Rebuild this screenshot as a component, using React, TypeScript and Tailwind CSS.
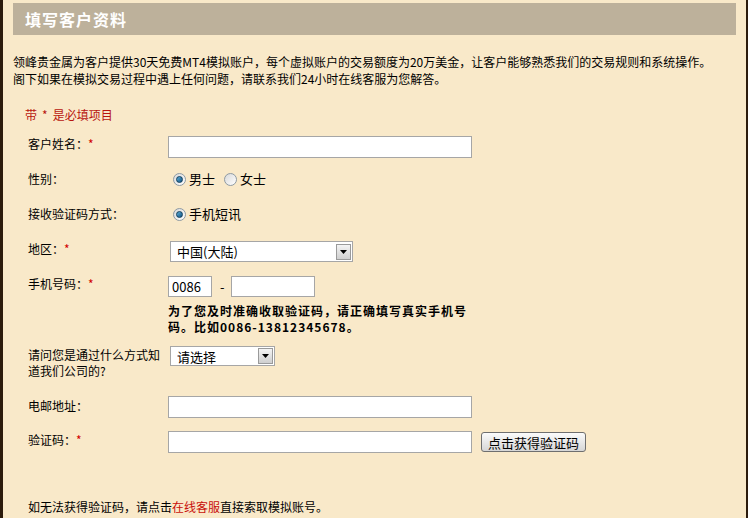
import React from 'react';

const font = { fontFamily: '"Noto Sans CJK SC", "Liberation Sans", sans-serif' };

const Radio = ({ checked }: { checked?: boolean }) => (
  <span className="inline-flex h-[13px] w-[13px] items-center justify-center rounded-full border border-[#8e9aa3] bg-gradient-to-br from-[#d9d9d9] to-[#ffffff]">
    {checked && (
      <span className="h-[7px] w-[7px] rounded-full border border-[#0e3c5a] bg-gradient-to-br from-[#5fb0da] to-[#0d5484]" />
    )}
  </span>
);

const SelectBox = ({ value, width }: { value: string; width: string }) => (
  <div className={`flex h-full items-center justify-between border border-[#a6a6a6] bg-white pl-[6px] pr-px ${width}`}>
    <span className="text-[13px] leading-none text-black">{value}</span>
    <span className="flex h-[16px] w-[15px] items-center justify-center border border-[#9a9a9a] bg-gradient-to-b from-[#f4f4f4] to-[#cfcfcf]">
      <svg width="7" height="4" viewBox="0 0 7 4">
        <path d="M0 0h7L3.5 4z" fill="#000" />
      </svg>
    </span>
  </div>
);

const Req = () => <span className="text-[#d20000]">*</span>;

export default function App() {
  return (
    <div
      style={font}
      className="h-[518px] w-[748px] overflow-hidden border-l-[3px] border-r-[2px] border-[#2c1b0c] bg-[#f9e9c9] text-[12px] text-black"
    >
      <div className="pl-[10px] pt-[3px]">
        <div className="flex h-[32px] w-[723px] items-center bg-[#bdb19b] pl-[12px]">
          <span className="text-[16px] font-bold tracking-[1px] text-white">填写客户资料</span>
        </div>

        <p className="mt-[18px] leading-[17px]">
          领峰贵金属为客户提供30天免费MT4模拟账户，每个虚拟账户的交易额度为20万美金，让客户能够熟悉我们的交易规则和系统操作。
          <br />
          阁下如果在模拟交易过程中遇上任何问题，请联系我们24小时在线客服为您解答。
        </p>

        <p className="ml-[12px] mt-[20px] leading-[16px] text-[#b8150f]">
          带<span className="mx-[5px]">*</span>是必填项目
        </p>

        <div className="ml-[15px]">
          <div className="mt-[13px] flex h-[22px] items-start">
            <span className="w-[140px] leading-[16px]">客户姓名：<Req /></span>
            <input className="h-[22px] w-[304px] border border-[#a6a6a6] bg-white outline-none" />
          </div>

          <div className="mt-[9px] flex h-[24px] items-center">
            <span className="w-[140px]">性别：</span>
            <div className="ml-[5px] flex items-center gap-[3px] text-[13px]">
              <Radio checked />
              <span>男士</span>
              <span className="ml-[3px]" />
              <Radio />
              <span>女士</span>
            </div>
          </div>

          <div className="mt-[11px] flex h-[24px] items-center">
            <span className="w-[140px]">接收验证码方式：</span>
            <div className="ml-[5px] flex items-center gap-[3px] text-[13px]">
              <Radio checked />
              <span>手机短讯</span>
            </div>
          </div>

          <div className="mt-[15px] flex h-[21px] items-start">
            <span className="w-[140px] leading-[16px]">地区：<Req /></span>
            <div className="ml-[2px] h-[21px]">
              <SelectBox value="中国(大陆)" width="w-[183px]" />
            </div>
          </div>

          <div className="mt-[14px] flex items-start">
            <span className="w-[140px] leading-[16px]">手机号码：<Req /></span>
            <div>
              <div className="flex h-[21px] items-center">
                <div className="flex h-[21px] w-[44px] items-center border border-[#a6a6a6] bg-white pl-[3px] text-[13px]">
                  0086
                </div>
                <span className="ml-[8px] mr-[6px] text-[13px]">-</span>
                <input className="h-[21px] w-[84px] border border-[#a6a6a6] bg-white outline-none" />
              </div>
              <p className="mt-[6px] text-[12px] font-bold leading-[16px] tracking-[1px]">
                为了您及时准确收取验证码，请正确填写真实手机号
                <br />
                码。比如0086-13812345678。
              </p>
            </div>
          </div>

          <div className="mt-[11px] flex items-start">
            <span className="w-[140px] pt-px leading-[16px]">
              请问您是通过什么方式知
              <br />
              道我们公司的?
            </span>
            <div className="ml-[2px] h-[20px]">
              <SelectBox value="请选择" width="w-[105px]" />
            </div>
          </div>

          <div className="mt-[17px] flex h-[22px] items-start">
            <span className="w-[140px] pt-[2px] leading-[16px]">电邮地址：</span>
            <input className="h-[22px] w-[304px] border border-[#a6a6a6] bg-white outline-none" />
          </div>

          <div className="mt-[13px] flex h-[22px] items-start">
            <span className="w-[140px] pt-px leading-[16px]">验证码：<Req /></span>
            <input className="h-[22px] w-[304px] border border-[#a6a6a6] bg-white outline-none" />
            <button className="ml-[9px] mt-px flex h-[20px] w-[105px] items-center justify-center rounded-[3px] border border-[#6f6f6f] bg-gradient-to-b from-[#fbfbfb] to-[#d6d6d6] text-[13px] leading-none">
              点击获得验证码
            </button>
          </div>

          <p className="mt-[46px] leading-[16px]">
            如无法获得验证码，请点击<span className="text-[#c8100b]">在线客服</span>直接索取模拟账号。
          </p>
        </div>
      </div>
    </div>
  );
}
